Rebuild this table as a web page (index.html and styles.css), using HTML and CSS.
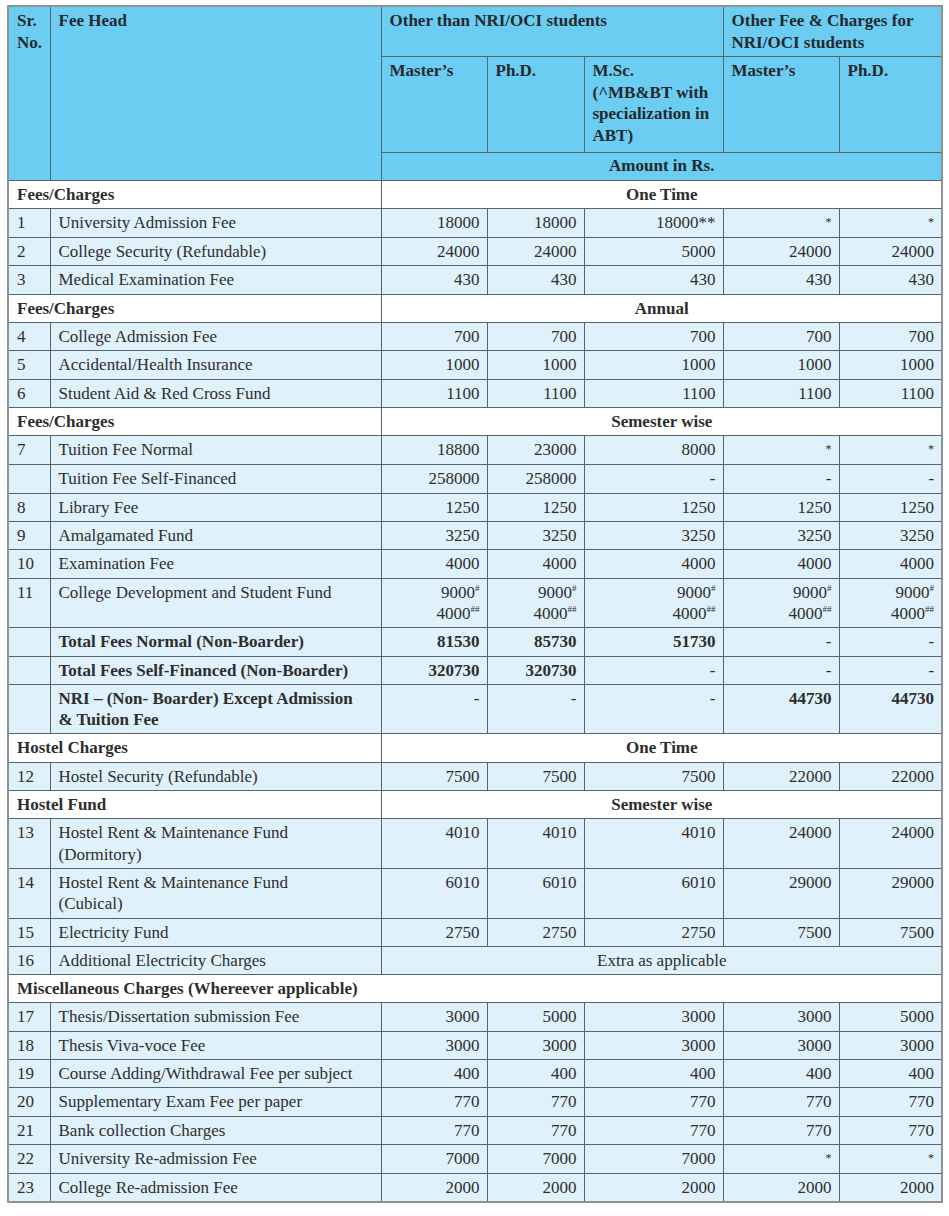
FILE: index.html
```html
<!DOCTYPE html>
<html lang="en">
<head>
<meta charset="utf-8">
<title>Fee Structure</title>
<link rel="stylesheet" href="styles.css">
</head>
<body>
<table class="fees">
<colgroup>
<col class="c-sr"><col class="c-head"><col class="c-m"><col class="c-p"><col class="c-msc"><col class="c-nm"><col class="c-np">
</colgroup>
<thead>
<tr>
<th rowspan="3">Sr.<br>No.</th>
<th rowspan="3">Fee Head</th>
<th colspan="3">Other than NRI/OCI students</th>
<th colspan="2">Other Fee &amp; Charges for NRI/OCI students</th>
</tr>
<tr class="sub">
<th>Master’s</th>
<th>Ph.D.</th>
<th>M.Sc.<br>(^MB&amp;BT with specialization in ABT)</th>
<th>Master’s</th>
<th>Ph.D.</th>
</tr>
<tr>
<th colspan="5" class="center">Amount in Rs.</th>
</tr>
</thead>
<tbody>
<tr class="sec"><td colspan="2">Fees/Charges</td><td colspan="5">One Time</td></tr>
<tr><td>1</td><td>University Admission Fee</td><td>18000</td><td>18000</td><td>18000**</td><td><span class="ast">*</span></td><td><span class="ast">*</span></td></tr>
<tr><td>2</td><td>College Security (Refundable)</td><td>24000</td><td>24000</td><td>5000</td><td>24000</td><td>24000</td></tr>
<tr><td>3</td><td>Medical Examination Fee</td><td>430</td><td>430</td><td>430</td><td>430</td><td>430</td></tr>
<tr class="sec"><td colspan="2">Fees/Charges</td><td colspan="5">Annual</td></tr>
<tr><td>4</td><td>College Admission Fee</td><td>700</td><td>700</td><td>700</td><td>700</td><td>700</td></tr>
<tr><td>5</td><td>Accidental/Health Insurance</td><td>1000</td><td>1000</td><td>1000</td><td>1000</td><td>1000</td></tr>
<tr><td>6</td><td>Student Aid &amp; Red Cross Fund</td><td>1100</td><td>1100</td><td>1100</td><td>1100</td><td>1100</td></tr>
<tr class="sec"><td colspan="2">Fees/Charges</td><td colspan="5">Semester wise</td></tr>
<tr><td>7</td><td>Tuition Fee Normal</td><td>18800</td><td>23000</td><td>8000</td><td><span class="ast">*</span></td><td><span class="ast">*</span></td></tr>
<tr><td></td><td>Tuition Fee Self-Financed</td><td>258000</td><td>258000</td><td>-</td><td>-</td><td>-</td></tr>
<tr><td>8</td><td>Library Fee</td><td>1250</td><td>1250</td><td>1250</td><td>1250</td><td>1250</td></tr>
<tr><td>9</td><td>Amalgamated Fund</td><td>3250</td><td>3250</td><td>3250</td><td>3250</td><td>3250</td></tr>
<tr><td>10</td><td>Examination Fee</td><td>4000</td><td>4000</td><td>4000</td><td>4000</td><td>4000</td></tr>
<tr><td>11</td><td>College Development and Student Fund</td><td>9000<sup>#</sup><br>4000<sup>##</sup></td><td>9000<sup>#</sup><br>4000<sup>##</sup></td><td>9000<sup>#</sup><br>4000<sup>##</sup></td><td>9000<sup>#</sup><br>4000<sup>##</sup></td><td>9000<sup>#</sup><br>4000<sup>##</sup></td></tr>
<tr class="total"><td></td><td>Total Fees Normal (Non-Boarder)</td><td>81530</td><td>85730</td><td>51730</td><td class="n">-</td><td class="n">-</td></tr>
<tr class="total"><td></td><td>Total Fees Self-Financed (Non-Boarder)</td><td>320730</td><td>320730</td><td class="n">-</td><td class="n">-</td><td class="n">-</td></tr>
<tr class="total"><td></td><td>NRI – (Non- Boarder) Except Admission<br>&amp; Tuition Fee</td><td class="n">-</td><td class="n">-</td><td class="n">-</td><td>44730</td><td>44730</td></tr>
<tr class="sec"><td colspan="2">Hostel Charges</td><td colspan="5">One Time</td></tr>
<tr><td>12</td><td>Hostel Security (Refundable)</td><td>7500</td><td>7500</td><td>7500</td><td>22000</td><td>22000</td></tr>
<tr class="sec"><td colspan="2">Hostel Fund</td><td colspan="5">Semester wise</td></tr>
<tr><td>13</td><td>Hostel Rent &amp; Maintenance Fund<br>(Dormitory)</td><td>4010</td><td>4010</td><td>4010</td><td>24000</td><td>24000</td></tr>
<tr><td>14</td><td>Hostel Rent &amp; Maintenance Fund<br>(Cubical)</td><td>6010</td><td>6010</td><td>6010</td><td>29000</td><td>29000</td></tr>
<tr><td>15</td><td>Electricity Fund</td><td>2750</td><td>2750</td><td>2750</td><td>7500</td><td>7500</td></tr>
<tr><td>16</td><td>Additional Electricity Charges</td><td colspan="5" class="center">Extra as applicable</td></tr>
<tr class="sec"><td colspan="7" class="left">Miscellaneous Charges (Whereever applicable)</td></tr>
<tr><td>17</td><td>Thesis/Dissertation submission Fee</td><td>3000</td><td>5000</td><td>3000</td><td>3000</td><td>5000</td></tr>
<tr><td>18</td><td>Thesis Viva-voce Fee</td><td>3000</td><td>3000</td><td>3000</td><td>3000</td><td>3000</td></tr>
<tr><td>19</td><td>Course Adding/Withdrawal Fee per subject</td><td>400</td><td>400</td><td>400</td><td>400</td><td>400</td></tr>
<tr><td>20</td><td>Supplementary Exam Fee per paper</td><td>770</td><td>770</td><td>770</td><td>770</td><td>770</td></tr>
<tr><td>21</td><td>Bank collection Charges</td><td>770</td><td>770</td><td>770</td><td>770</td><td>770</td></tr>
<tr><td>22</td><td>University Re-admission Fee</td><td>7000</td><td>7000</td><td>7000</td><td><span class="ast">*</span></td><td><span class="ast">*</span></td></tr>
<tr><td>23</td><td>College Re-admission Fee</td><td>2000</td><td>2000</td><td>2000</td><td>2000</td><td>2000</td></tr>
</tbody>
</table>
</body>
</html>
```
FILE: styles.css
```css
html, body {
  margin: 0;
  padding: 0;
  background: #ffffff;
}
body {
  padding: 5px 0 0 7px;
  font-family: "Liberation Serif", "Times New Roman", serif;
  font-size: 17px;
  color: #2e2e2e;
}
.fees {
  width: 934px;
  table-layout: fixed;
  border-collapse: collapse;
  border: 2px solid #8c9396;
}
.c-sr { width: 42px; }
.c-head { width: 331px; }
.c-m { width: 106px; }
.c-p { width: 97px; }
.c-msc { width: 139px; }
.c-nm { width: 116px; }
.c-np { width: 103px; }

.fees th,
.fees td {
  border: 1px solid #56636a;
  padding: 3px 7px 3px 8px;
  line-height: 21.3px;
  vertical-align: top;
}
.fees th {
  background: #6ccdf2;
  text-align: left;
  font-weight: bold;
  color: #23292d;
  line-height: 21.5px;
}
.fees tr.sub th { padding-bottom: 6px; }
.fees th.center {
  text-align: center;
  padding-top: 2px;
  padding-bottom: 3px;
}

.fees tbody td {
  background: #dff1fa;
  text-align: right;
}
.fees tbody td:nth-child(1),
.fees tbody td:nth-child(2) {
  text-align: left;
}
.fees tbody td.center { text-align: center; }

.fees tr.sec td {
  background: #ffffff;
  font-weight: bold;
  text-align: center;
}
.fees tr.sec td:first-child,
.fees tr.sec td.left {
  text-align: left;
}
.fees tr.total td { font-weight: bold; }
.fees tr.total td.n { font-weight: normal; }

.fees sup {
  font-size: 9px;
  line-height: 0;
  vertical-align: 7px;
}
.ast {
  font-size: 12px;
  vertical-align: 3px;
}
```
